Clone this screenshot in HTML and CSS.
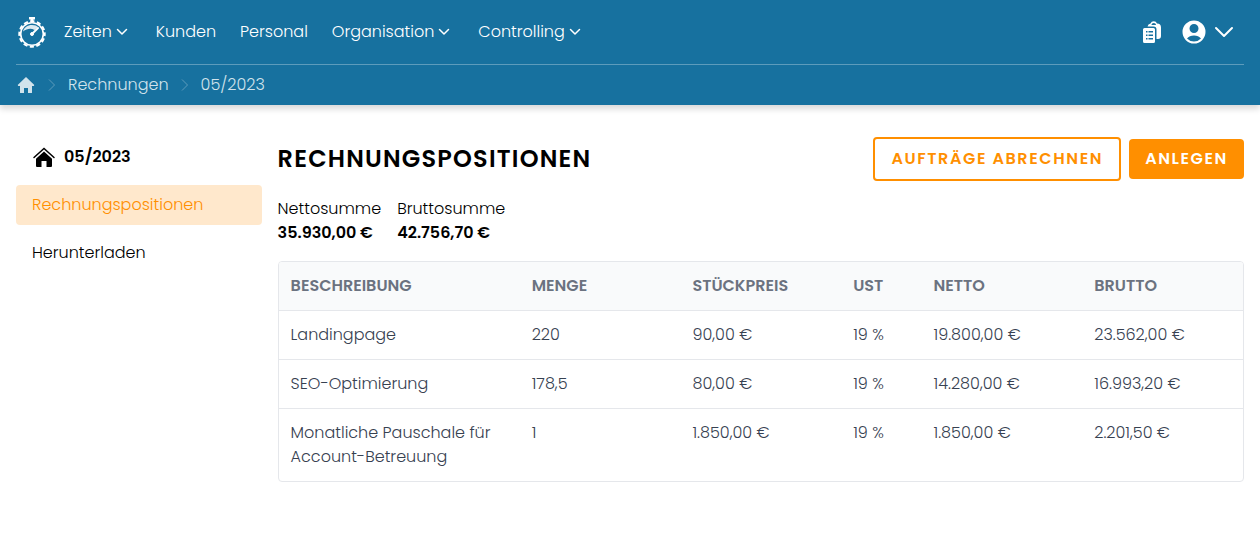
FILE: index.html
```
<!DOCTYPE html>
<html lang="de">
<head>
    <meta charset="UTF-8">
    <meta name="viewport" content="width=device-width, initial-scale=1.0">
    <title>Rechnungspositionen</title>
    <link rel="stylesheet" href="styles.css">
</head>
<body>
    <header class="header">
        <nav class="navbar">
            <a href="#" class="logo" aria-label="Startseite">
                <svg width="32" height="32" viewBox="0 0 32 32" fill="none" stroke="#fff">
                    <path d="M13 1h6v2.500h-6z" fill="#fff" stroke="none"/>
                    <path d="M16 3v3" stroke-width="3"/>
                    <circle cx="16" cy="18" r="11.300" stroke-width="1.600"/>
                    <circle cx="16" cy="18" r="12.700" stroke-width="2" stroke-dasharray="4.200 2.450" stroke-dashoffset="2.100"/>
                    <path d="M7 15.500C8 11.500 11.500 9 16 9c3 0 4.800.8 6 2L18.500 14C15 12 11 12.500 7 15.500z" fill="#fff" fill-opacity=".85" stroke="none"/>
                    <path d="M16.500 17.500L22 12" stroke-width="2" stroke-linecap="round"/>
                    <circle cx="16" cy="18" r="1.500" fill="#fff"/>
                </svg>
            </a>
            <ul class="menu">
                <li><button type="button" class="menu-link has-sub">Zeiten<svg width="16" height="16" viewBox="0 0 16 16"><path d="M3.500 5.500L8 10l4.500-4.500"/></svg></button></li>
                <li><a href="#" class="menu-link">Kunden</a></li>
                <li><a href="#" class="menu-link">Personal</a></li>
                <li><button type="button" class="menu-link has-sub">Organisation<svg width="16" height="16" viewBox="0 0 16 16"><path d="M3.500 5.500L8 10l4.500-4.500"/></svg></button></li>
                <li><button type="button" class="menu-link has-sub">Controlling<svg width="16" height="16" viewBox="0 0 16 16"><path d="M3.500 5.500L8 10l4.500-4.500"/></svg></button></li>
            </ul>
            <div class="tools">
                <button type="button" class="icon-button" aria-label="Aufgaben">
                    <svg width="24" height="24" viewBox="0 0 24 24" fill="#fff">
                        <path fill-rule="evenodd" d="M4.500 8h9A1.500 1.500 0 0 1 15 9.500v12a1.500 1.500 0 0 1-1.500 1.500h-9A1.500 1.500 0 0 1 3 21.500v-12A1.500 1.500 0 0 1 4.500 8zM6 11v1.500h1.500V11zm2.500 0v1.500H13V11zM6 14.500V16h1.500v-1.500zm2.500 0V16H13v-1.500zM6 18v1.500h1.500V18zm2.500 0v1.500H13V18z"/>
                        <path fill-rule="evenodd" d="M7.500 6.500A4 4 0 0 1 10.500 3.500 3.500 3.500 0 0 1 17 3.500a4 4 0 0 1 4 4V16a3 3 0 0 1-3 3h-1.500V9.500a3 3 0 0 0-3-3zM11.500 5h4.500c0-1.300-1-2-2.200-2s-2.300.7-2.300 2z"/>
                    </svg>
                </button>
                <button type="button" class="icon-button user-button" aria-label="Benutzer">
                    <svg width="24" height="24" viewBox="0 0 24 24" fill="#fff">
                        <path fill-rule="evenodd" d="M12 .5a11.500 11.500 0 1 0 0 23 11.500 11.500 0 0 0 0-23zM12 4a4.500 4.500 0 1 1 0 9 4.500 4.500 0 0 1 0-9zM5 18.500c1.600-2 4-3 7-3s5.400 1 7 3a9.600 9.600 0 0 1-14 0z"/>
                    </svg>
                    <svg class="chevron" width="20" height="24" viewBox="0 0 20 24"><path d="M2 8l8 8 8-8"/></svg>
                </button>
            </div>
        </nav>
        <nav class="breadcrumb" aria-label="Brotkrumen">
            <a href="#" class="home" aria-label="Start">
                <svg width="20" height="20" viewBox="0 0 20 20" fill="currentColor"><path d="M10 2l8.300 8-.5 1H16v6.500a.5.500 0 0 1-.5.500H12v-5H8v5H4.500a.5.500 0 0 1-.5-.5V11H2.200l-.5-1z"/></svg>
            </a>
            <svg class="separator" width="16" height="16" viewBox="0 0 16 16"><path d="M5 2.500L10.500 8 5 13.500"/></svg>
            <a href="#">Rechnungen</a>
            <svg class="separator" width="16" height="16" viewBox="0 0 16 16"><path d="M5 2.500L10.500 8 5 13.500"/></svg>
            <a href="#">05/2023</a>
        </nav>
    </header>

    <div class="page">
        <aside class="sidebar">
            <a href="#" class="sidebar-title">
                <svg width="24" height="24" viewBox="0 0 24 24">
                    <path d="M12 6.500l8 7.300V21a1 1 0 0 1-1 1h-4.500v-6h-5v6H5a1 1 0 0 1-1-1v-7.200z"/>
                    <path d="M2 12.500L12 3.500l10 9" fill="none" stroke="#000" stroke-width="1.500" stroke-linecap="round"/>
                </svg>
                05/2023
            </a>
            <a href="#" class="sidebar-link active">Rechnungspositionen</a>
            <a href="#" class="sidebar-link">Herunterladen</a>
        </aside>

        <main class="content">
            <div class="title-row">
                <h1>Rechnungspositionen</h1>
                <div class="actions">
                    <button type="button" class="btn btn-outline">Aufträge abrechnen</button>
                    <button type="button" class="btn btn-primary">Anlegen</button>
                </div>
            </div>

            <dl class="totals">
                <div>
                    <dt>Nettosumme</dt>
                    <dd>35.930,00 €</dd>
                </div>
                <div>
                    <dt>Bruttosumme</dt>
                    <dd>42.756,70 €</dd>
                </div>
            </dl>

            <div class="table-box">
                <table>
                    <thead>
                        <tr>
                            <th class="col-wide">Beschreibung</th>
                            <th>Menge</th>
                            <th>Stückpreis</th>
                            <th class="col-small">USt</th>
                            <th>Netto</th>
                            <th>Brutto</th>
                        </tr>
                    </thead>
                    <tbody>
                        <tr>
                            <td>Landingpage</td>
                            <td>220</td>
                            <td>90,00 €</td>
                            <td>19 %</td>
                            <td>19.800,00 €</td>
                            <td>23.562,00 €</td>
                        </tr>
                        <tr>
                            <td>SEO-Optimierung</td>
                            <td>178,5</td>
                            <td>80,00 €</td>
                            <td>19 %</td>
                            <td>14.280,00 €</td>
                            <td>16.993,20 €</td>
                        </tr>
                        <tr>
                            <td>Monatliche Pauschale für Account-Betreuung</td>
                            <td>1</td>
                            <td>1.850,00 €</td>
                            <td>19 %</td>
                            <td>1.850,00 €</td>
                            <td>2.201,50 €</td>
                        </tr>
                    </tbody>
                </table>
            </div>
        </main>
    </div>
</body>
</html>
```
FILE: styles.css
```
* {
    box-sizing: border-box;
}

body {
    margin: 0;
    font-family: Poppins, Inter, sans-serif;
    font-size: 16px;
    font-weight: 300;
    line-height: 24px;
    color: #000;
    background-color: #fff;
}

a {
    color: inherit;
    text-decoration: none;
}

button {
    font: inherit;
    cursor: pointer;
}

svg {
    display: block;
    flex-shrink: 0;
}

.header {
    padding: 0 16px;
    background-color: #17719f;
    color: #fff;
    box-shadow: 0 4px 6px rgba(0, 0, 0, 0.15);
}

.navbar {
    display: flex;
    align-items: center;
    height: 65px;
    border-bottom: 1px solid #5d9cbc;
}

.menu {
    display: flex;
    gap: 24px;
    margin: 0 0 0 16px;
    padding: 0;
    list-style: none;
}

.menu-link {
    display: flex;
    align-items: center;
    padding: 0;
    border: none;
    background: none;
    color: #fff;
}

.has-sub {
    gap: 2px;
    margin-right: 2px;
}

.has-sub svg,
.chevron {
    fill: none;
    stroke: #fff;
    stroke-width: 1.5;
    stroke-linecap: round;
    stroke-linejoin: round;
}

.chevron {
    stroke-width: 2;
}

.tools {
    display: flex;
    gap: 18px;
    margin-left: auto;
    padding-right: 10px;
}

.icon-button {
    display: flex;
    padding: 0;
    border: none;
    background: none;
}

.user-button {
    gap: 8px;
}

.breadcrumb {
    display: flex;
    align-items: center;
    gap: 8px;
    height: 40px;
    color: #d1e3ec;
}

.separator {
    fill: none;
    stroke: #5d9cbc;
}

.page {
    display: flex;
    padding: 32px 16px;
}

.sidebar {
    display: flex;
    flex-direction: column;
    gap: 8px;
    width: 20%;
}

.sidebar-title {
    display: flex;
    align-items: center;
    gap: 8px;
    height: 40px;
    padding: 0 16px;
    font-weight: 600;
}

.sidebar-link {
    padding: 8px 16px;
    border-radius: 4px;
}

.sidebar-link.active {
    background-color: #ffe8cc;
    color: #ff8f00;
}

.content {
    width: 80%;
    padding-left: 16px;
}

.title-row {
    display: flex;
    align-items: center;
    justify-content: space-between;
}

h1 {
    margin: 0;
    font-size: 24px;
    line-height: 32px;
    font-weight: 600;
    letter-spacing: 0.05em;
    text-transform: uppercase;
}

.actions {
    display: flex;
    align-items: center;
    gap: 8px;
}

.btn {
    padding: 8px 16px;
    border: none;
    border-radius: 4px;
    font-weight: 600;
    letter-spacing: 0.1em;
    text-transform: uppercase;
}

.btn-outline {
    border: 2px solid #ff8f00;
    background-color: #fff;
    color: #ff8f00;
}

.btn-primary {
    background-color: #ff8f00;
    color: #fff;
}

.totals {
    display: flex;
    gap: 16px;
    margin: 16px 0;
}

.totals dd {
    margin: 0;
    font-weight: 600;
}

.table-box {
    border: 1px solid #e5e7eb;
    border-radius: 4px;
    overflow: hidden;
}

table {
    width: 100%;
    table-layout: fixed;
    border-collapse: collapse;
    color: #374151;
}

th,
td {
    padding: 12px;
    text-align: left;
    vertical-align: top;
}

th {
    background-color: #f9fafb;
    color: #6b7280;
    font-weight: 600;
    text-transform: uppercase;
}

tbody tr {
    border-top: 1px solid #e5e7eb;
}

.col-wide {
    width: 25%;
}

.col-small {
    width: 8.3333%;
}
```
